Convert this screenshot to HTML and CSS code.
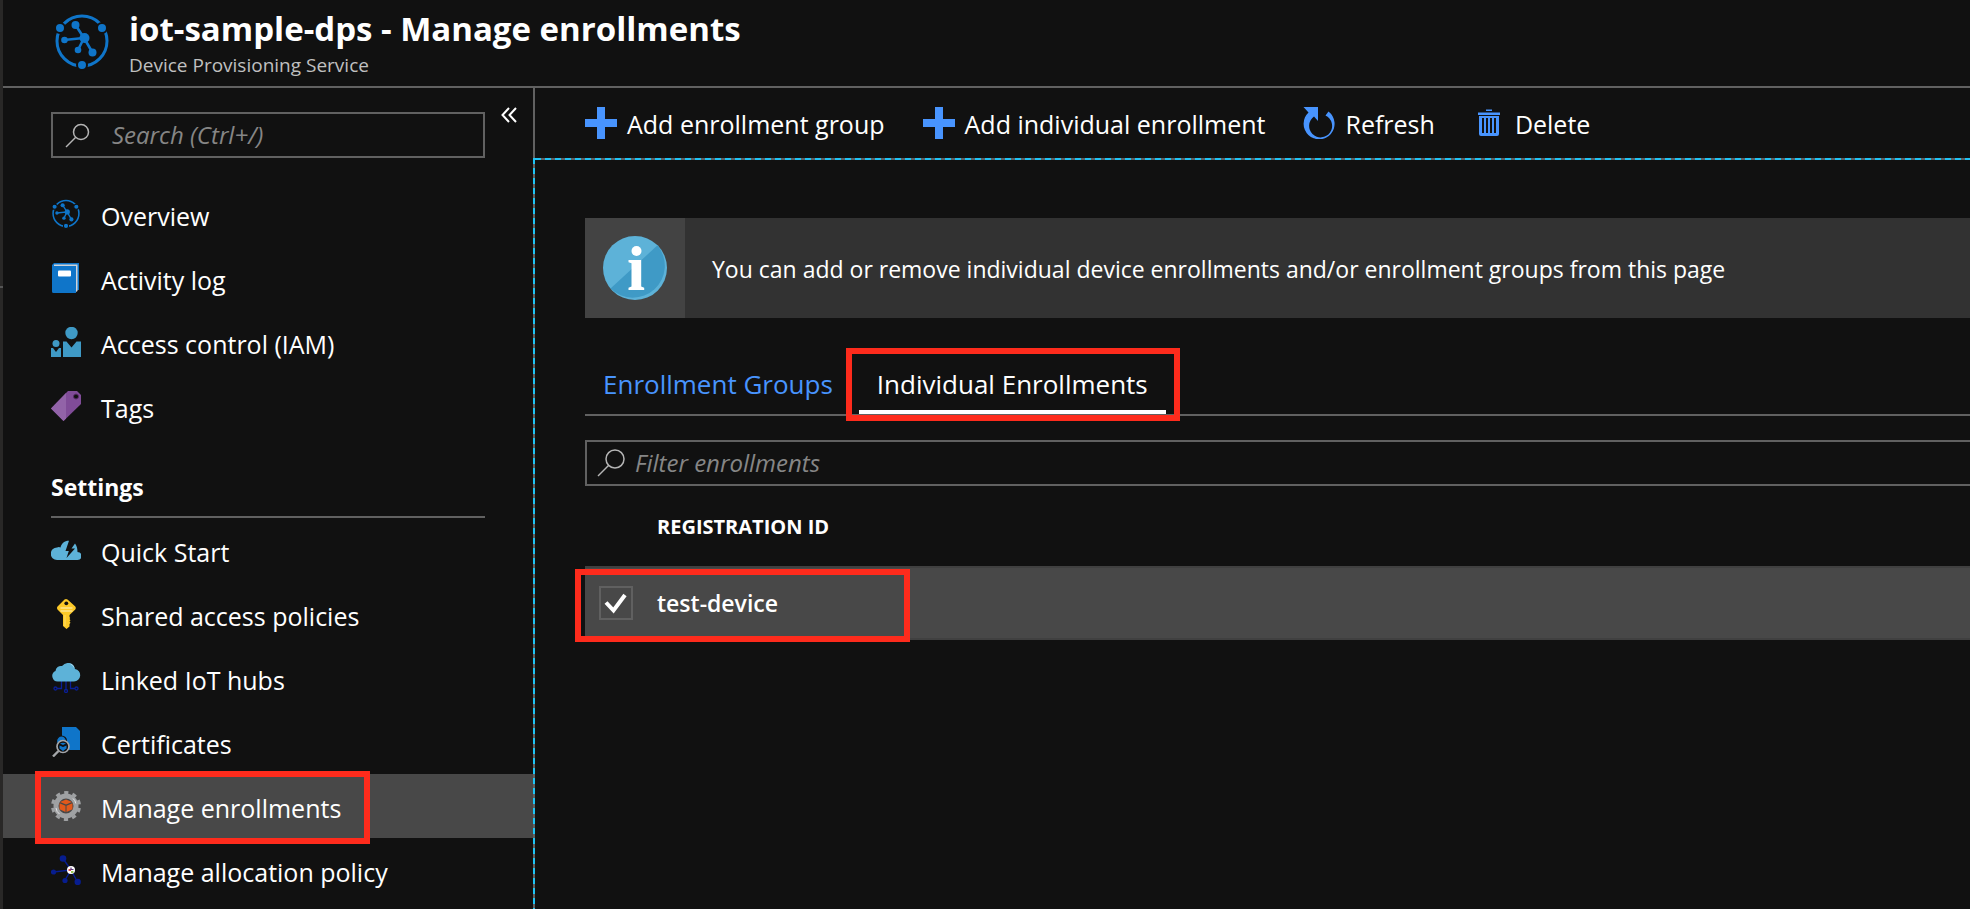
FILE: index.html
```
<!DOCTYPE html>
<html lang="en">
<head>
<meta charset="utf-8">
<title>iot-sample-dps - Manage enrollments</title>
<link rel="stylesheet" href="styles.css">
</head>
<body>
<svg class="defs" aria-hidden="true">
  <symbol id="dps" viewBox="15 13 54 58">
    <circle cx="42" cy="41" r="25" fill="none" stroke="#0f75c9" stroke-width="3"/>
    <g class="cut"><circle cx="20" cy="28" r="5"/><circle cx="62" cy="28" r="5"/><circle cx="42" cy="65" r="5"/></g>
    <path d="M35.500 25 44 38 24 40M44 38l-6 12M44 38l8.500 14.500" fill="none" stroke="#0f75c9" stroke-width="2.600"/>
    <g fill="#0f75c9"><circle cx="44.500" cy="38" r="5"/><circle cx="35.500" cy="25" r="4"/><circle cx="24.500" cy="40" r="3.300"/><circle cx="38" cy="50" r="3.300"/><circle cx="52.500" cy="52.500" r="4"/></g>
  </symbol>
</svg>

<div class="rail"></div>
<div class="blade">
  <header class="header">
    <svg class="header-icon" aria-hidden="true"><use href="#dps"/></svg>
    <div>
      <h1 class="title">iot-sample-dps - Manage enrollments</h1>
      <p class="subtitle">Device Provisioning Service</p>
    </div>
  </header>

  <div class="body">
    <nav class="sidebar" aria-label="Resource menu">
      <div class="search-row">
        <label class="field">
          <svg class="search-icon" viewBox="0 0 25 25" aria-hidden="true"><circle cx="16" cy="9" r="7.500"/><path d="M10.500 14.500 1 24"/></svg>
          <input class="field-input" type="text" placeholder="Search (Ctrl+/)" aria-label="Search">
        </label>
        <button class="collapse" type="button" aria-label="Collapse menu">
          <svg viewBox="0 0 16 16" width="16" height="16" aria-hidden="true"><path d="M8 1 1.500 8 8 15M15 1 8.500 8 15 15"/></svg>
        </button>
      </div>

      <ul class="menu">
        <li><a class="item" href="#">
          <svg class="item-icon" aria-hidden="true"><use href="#dps"/></svg>
          <span class="item-text">Overview</span></a></li>
        <li><a class="item" href="#">
          <svg class="item-icon" viewBox="0 0 30 30" aria-hidden="true"><path d="M3 0h25v27h-3v3H2.500A1.500 1.500 0 0 1 1 28.500V2z" fill="#0f75c9"/><path d="M3 1.500h23.500V28L25 29V3H3z" fill="#d0d3d8"/><rect x="7" y="7.500" width="13" height="6" rx="1" fill="#fff"/></svg>
          <span class="item-text">Activity log</span></a></li>
        <li><a class="item" href="#">
          <svg class="item-icon" viewBox="0 0 30 30" fill="#3f9ac6" aria-hidden="true"><circle cx="20.500" cy="6" r="6.200"/><path d="M12 14.500h3.500l5 6 5-6H30V30H12z"/><circle cx="5" cy="16.500" r="3.500"/><path d="M0 21h2l3 4 3-4h2v9H0z"/></svg>
          <span class="item-text">Access control (IAM)</span></a></li>
        <li><a class="item" href="#">
          <svg class="item-icon" viewBox="0 0 30 30" aria-hidden="true"><path d="M17 0h9l4 4v9L12.500 30 0 17.500z" fill="#804c98"/><path d="M15 2v25.500L12.500 30 0 17.500z" fill="#9263a8"/><circle cx="25" cy="5.500" r="2.500" fill="#111" stroke="#5c2d6e"/></svg>
          <span class="item-text">Tags</span></a></li>
      </ul>

      <h2 class="section">Settings</h2>
      <ul class="menu">
        <li><a class="item" href="#">
          <svg class="item-icon" viewBox="0 0 30 30" aria-hidden="true"><path d="M6 25a6 6 0 0 1 0-12.500q2-1 3.500 0C10.500 8 14 5.500 18 5.700L14.500 16h3.300L15.500 23 24 13.500h-3.500L24 8.500q2.500 3 2.500 8.500a4 4 0 0 1 0 8z" fill="#5db2d8"/></svg>
          <span class="item-text">Quick Start</span></a></li>
        <li><a class="item" href="#">
          <svg class="item-icon" viewBox="0 0 30 30" aria-hidden="true"><path d="M13.500.6q1.500-1.200 3 0L24.300 7.500q1 1.500 0 3L18.500 16v2l.7 1-.7 1 1 1.300-1 1.200 1 1.300-1 1.200v2.500L15.500 30 12 27V16L6.500 10.500q-1-1.500 0-3z" fill="#fcc928"/><path d="M9.500 9h12M9.500 12h12" stroke="#fde48d" stroke-width="1.500"/><path d="M14 16v11" stroke="#fddc6b"/><circle cx="15.300" cy="4.300" r="1.900" fill="#111"/></svg>
          <span class="item-text">Shared access policies</span></a></li>
        <li><a class="item" href="#">
          <svg class="item-icon" viewBox="0 0 30 30" aria-hidden="true"><g fill="none" stroke="#0a1f96" stroke-width="1.300"><path d="M10.500 18v7.500H6M15 18v8M19.500 18v7.500H24"/><circle cx="4.500" cy="25.500" r="1.500"/><circle cx="15" cy="28" r="1.500"/><circle cx="25.500" cy="25.500" r="1.500"/></g><path d="M7 18.500a5.500 5.500 0 0 1-2.500-10.500A5.500 5.500 0 0 1 11 3q3-3.500 7.500-3 4.500.8 5.500 6a6.300 6.300 0 0 1-1 12.500z" fill="#5db2d8"/><path d="M18.500.5q4.500.8 5 5-1.500-3-5-5z" fill="#b4dcee"/></svg>
          <span class="item-text">Linked IoT hubs</span></a></li>
        <li><a class="item" href="#">
          <svg class="item-icon" viewBox="0 0 30 30" aria-hidden="true"><path d="M11 0h14l4 4v19H11z" fill="#0f75c9"/><circle cx="10.500" cy="14" r="5" fill="#0f75c9" stroke="#111" stroke-width="1.200"/><circle cx="12" cy="19.500" r="6" fill="#111" stroke="#a5a7aa" stroke-width="1.700"/><path d="M8.500 18.500 12 20l3.500-1.500v3L12 24l-3.500-2.500zM9 16.500q3-1.500 6 0l-3 1.500z" fill="#0f75c9"/><path d="M7.500 24 2 29.500" stroke="#a5a7aa" stroke-width="2.400"/></svg>
          <span class="item-text">Certificates</span></a></li>
        <li><a class="item item-selected" href="#" aria-current="page">
          <svg class="item-icon" viewBox="0 0 30 30" aria-hidden="true"><circle cx="15" cy="15" r="10" fill="none" stroke="#9fa1a3" stroke-width="5"/><circle cx="15" cy="15" r="13.500" fill="none" stroke="#9fa1a3" stroke-width="3" stroke-dasharray="4.240 4.240" stroke-dashoffset="-2"/><path d="M22 7.500q2.500 2 2.800 5M5 17q.5 4 3.500 6" fill="none" stroke="#e3e4e5"/><path d="m15 8.500 6 2.500-6 2.500L9 11zM8.500 12.200l6 2.500V21l-6-2.800zM21.500 12.200l-6 2.500V21l6-2.800z" fill="#e2591b"/></svg>
          <span class="item-text">Manage enrollments</span>
          <span class="callout callout-item"></span></a></li>
        <li><a class="item" href="#">
          <svg class="item-icon" viewBox="0 0 30 30" aria-hidden="true"><path d="M12 3.500 20 15 2.500 17M20 15l-6 10M20 15l6.500 12" fill="none" stroke="#071d8f" stroke-width="1.400"/><g fill="#071d8f"><circle cx="12" cy="3.500" r="3.300"/><circle cx="2.500" cy="17" r="2.600"/><circle cx="14" cy="25.500" r="2.600"/><circle cx="26.700" cy="27" r="3.200"/></g><circle cx="20" cy="15" r="4" fill="#fff"/><path d="M17.500 15h2.500" stroke="#d83b3b" stroke-width="1.800"/><path d="M20 17h2.500" stroke="#7fba2c" stroke-width="1.600"/><path d="M20 12.500v2h2.500" fill="none" stroke="#56357a" stroke-width="1.200"/></svg>
          <span class="item-text">Manage allocation policy</span></a></li>
      </ul>
    </nav>

    <main class="main">
      <div class="commands">
        <button class="command" type="button">
          <svg class="command-icon" viewBox="0 0 32 32" aria-hidden="true"><path d="M12 0h8v12h12v8H20v12h-8V20H0v-8h12z"/></svg><span class="command-text">Add enrollment group</span></button>
        <button class="command" type="button">
          <svg class="command-icon" viewBox="0 0 32 32" aria-hidden="true"><path d="M12 0h8v12h12v8H20v12h-8V20H0v-8h12z"/></svg><span class="command-text">Add individual enrollment</span></button>
        <button class="command" type="button">
          <svg class="command-icon" viewBox="0 0 32 32" aria-hidden="true"><path d="M.5 0H15v14l-4-4.500A11.500 11.500 0 1 0 22.500 8.500l3-4A15.500 15.500 0 1 1 5.500 5.500z"/></svg><span class="command-text">Refresh</span></button>
        <button class="command" type="button">
          <svg class="command-icon" viewBox="0 0 32 32" aria-hidden="true"><path d="M13 2.500h6V4h-6zM5 5.500h22V8H5zM6 9h20v18q0 2-2 2H8q-2 0-2-2zM9 11v15h2V11zm4 0v15h2V11zm4 0v15h2V11zm4 0v15h2V11z" fill-rule="evenodd"/></svg><span class="command-text">Delete</span></button>
      </div>

      <div class="content">
        <div class="banner">
          <div class="banner-mark">
            <svg viewBox="0 0 64 64" width="64" height="64" aria-hidden="true"><circle cx="32" cy="32" r="32" fill="#5db2d8"/><path d="M54.500 9.300A32 32 0 0 1 7.500 52.600z" fill="#3f9ac6"/><circle cx="33.500" cy="15" r="5" fill="#fff"/><path d="M25.500 24h12.700v26.500l3 1.300V54H25.500v-2.200l3-1.300V27.300l-3-1z" fill="#fff"/></svg>
          </div>
          <p class="banner-text">You can add or remove individual device enrollments and/or enrollment groups from this page</p>
        </div>

        <div class="tabs" role="tablist">
          <button class="tab" type="button" role="tab" aria-selected="false">Enrollment Groups</button>
          <button class="tab tab-active" type="button" role="tab" aria-selected="true">Individual Enrollments<span class="callout callout-tab"></span></button>
        </div>

        <label class="field field-filter">
          <svg class="filter-icon" viewBox="0 0 28 28" aria-hidden="true"><circle cx="18" cy="10" r="9"/><path d="M11.500 16.500 1 27"/></svg>
          <input class="field-input" type="text" placeholder="Filter enrollments" aria-label="Filter enrollments">
        </label>

        <table class="grid">
          <thead>
            <tr><th class="grid-check"></th><th class="grid-head" scope="col">REGISTRATION ID</th></tr>
          </thead>
          <tbody>
            <tr class="grid-row">
              <td class="grid-check">
                <span class="check">
                  <input class="check-box" id="row-1" type="checkbox" checked>
                  <svg class="check-mark" viewBox="0 0 34 34" aria-hidden="true"><path d="M7 16.500 14.500 24.500 26 9"/></svg>
                </span>
                <span class="callout callout-row"></span>
              </td>
              <td class="grid-cell"><label for="row-1">test-device</label></td>
            </tr>
          </tbody>
        </table>
      </div>
    </main>
  </div>
</div>
</body>
</html>
```
FILE: styles.css
```
* {
  box-sizing: border-box;
}

body {
  --line: #616161;
  --accent: #4894fe;
  --focus: #1fc3f5;
  display: flex;
  min-height: 100vh;
  margin: 0;
  overflow: hidden;
  background: #111;
  color: #fff;
  font: 25px/34px "Open Sans", "Noto Sans", sans-serif;
}

h1, h2, p, ul {
  margin: 0;
  padding: 0;
}

ul {
  list-style: none;
}

button {
  border: 0;
  padding: 0;
  background: none;
  color: inherit;
  font: inherit;
  cursor: pointer;
}

svg {
  display: block;
  flex: none;
}

.defs {
  position: absolute;
  width: 0;
  height: 0;
}

.cut {
  fill: #0f75c9;
  stroke: #111;
  stroke-width: 2;
}

.rail {
  flex: none;
  width: 3px;
  background: linear-gradient(#555, #555) 0 286px / 3px 2px no-repeat #292827;
}

.blade {
  display: flex;
  flex: 1;
  flex-direction: column;
  min-width: 0;
}

/* Header */

.header {
  display: flex;
  gap: 20px;
  padding: 6px 52px 8px;
  border-bottom: 2px solid var(--line);
}

.header-icon {
  width: 54px;
  height: 58px;
  margin-top: 7px;
}

.title {
  font-size: 33px;
  font-weight: 700;
  line-height: 46px;
}

.subtitle {
  color: #c0c0c0;
  font-size: 19px;
  line-height: 26px;
}

.body {
  display: flex;
  flex: 1;
}

/* Sidebar */

.sidebar {
  flex: none;
  width: 530px;
}

.search-row {
  display: flex;
  gap: 16px;
  align-items: flex-start;
  padding: 24px 16px 24px 48px;
}

.field {
  display: flex;
  flex: 1;
  align-items: center;
  height: 46px;
  border: 2px solid var(--line);
}

.field-input {
  flex: 1;
  min-width: 0;
  border: 0;
  padding: 0;
  background: none;
  color: #fff;
  font: 24px/34px "Open Sans", "Noto Sans", sans-serif;
  outline: 0;
}

.field-input::placeholder {
  color: #868686;
  font-style: italic;
  opacity: 1;
}

.search-icon,
.filter-icon {
  fill: none;
  stroke: #b5b5b5;
  stroke-width: 1.500;
}

.search-icon {
  width: 25px;
  height: 25px;
  margin: 0 22px 0 12px;
}

.collapse {
  width: 16px;
  margin-top: -5px;
}

.collapse path {
  fill: none;
  stroke: #fff;
  stroke-width: 2;
}

.item {
  position: relative;
  display: flex;
  gap: 20px;
  align-items: center;
  height: 64px;
  padding: 0 48px;
  color: #fff;
  text-decoration: none;
}

.item-icon {
  width: 30px;
  height: 30px;
}

.item-text {
  padding-top: 4px;
}

.item-selected {
  background: #484848;
}

.section {
  margin: 0 48px;
  padding: 32px 0 12px;
  border-bottom: 2px solid var(--line);
  font-size: 23px;
  font-weight: 700;
  line-height: 34px;
}

/* Main pane: its left edge is solid beside the commands and dashed below them */

.main {
  flex: 1;
  min-width: 0;
  padding-left: 2px;
  background:
    linear-gradient(var(--line), var(--line)) 0 0 / 2px 70px no-repeat,
    repeating-linear-gradient(var(--focus) 0 6px, var(--line) 6px 10px) 0 0 / 2px 100% no-repeat;
}

.commands {
  display: flex;
  gap: 38px;
  align-items: center;
  height: 72px;
  padding: 0 50px 2px;
  background: repeating-linear-gradient(90deg, var(--focus) 0 6px, var(--line) 6px 10px) 0 100% / 100% 2px no-repeat;
}

.command {
  display: flex;
  gap: 10px;
  align-items: center;
  white-space: nowrap;
}

.command-icon {
  width: 32px;
  height: 32px;
  fill: var(--accent);
}

.command-text {
  padding-top: 2px;
}

.content {
  padding: 58px 0 0 50px;
}

.banner {
  display: flex;
  background: #323232;
}

.banner-mark {
  display: grid;
  flex: none;
  place-items: center;
  width: 100px;
  height: 100px;
  background: #434343;
}

.banner-text {
  align-self: center;
  padding: 2px 27px 0;
  font-size: 23px;
}

.tabs {
  display: flex;
  gap: 8px;
  padding-top: 48px;
  border-bottom: 2px solid var(--line);
}

.tab {
  position: relative;
  height: 48px;
  padding: 0 18px 8px;
  border-bottom: 4px solid transparent;
  color: var(--accent);
  font-size: 26px;
  white-space: nowrap;
}

.tab-active {
  border-color: #fff;
  color: #fff;
}

.field-filter {
  margin-top: 24px;
  border-right: 0;
}

.filter-icon {
  width: 28px;
  height: 28px;
  margin: 0 10px 0 10px;
}

.grid {
  width: 100%;
  border-collapse: collapse;
  text-align: left;
}

.grid th {
  height: 80px;
  padding: 2px 0 0;
}

.grid-head {
  font-size: 20px;
  font-weight: 700;
}

.grid-row {
  position: relative;
  height: 74px;
  background: #484848;
  box-shadow: inset 0 2px #404040, inset 0 -2px #404040;
}

.grid-check {
  width: 72px;
}

.grid td {
  padding: 0;
}

.grid td.grid-check {
  padding-left: 14px;
}

.grid-cell {
  font-size: 23px;
  font-weight: 600;
}

.check {
  display: grid;
  width: 34px;
  height: 34px;
}

.check-box,
.check-mark {
  grid-area: 1 / 1;
  width: 34px;
  height: 34px;
  margin: 0;
}

.check-box {
  border: 2px solid #606060;
  appearance: none;
}

.check-mark {
  fill: none;
  stroke: #fff;
  stroke-width: 4;
  pointer-events: none;
}

/* Red outlines that mark the steps to follow */

.callout {
  position: absolute;
  border: 6px solid #fe2b1c;
  pointer-events: none;
}

.callout-item {
  top: -3px;
  bottom: -6px;
  left: 32px;
  width: 335px;
}

.callout-tab {
  inset: -18px -14px -11px -13px;
}

.callout-row {
  top: 3px;
  bottom: -2px;
  left: -10px;
  width: 335px;
}
```
